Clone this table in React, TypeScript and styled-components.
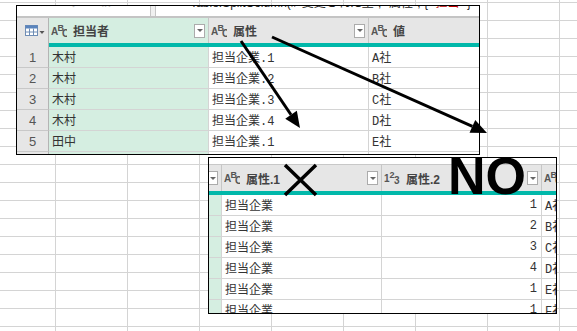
import React from 'react';
import styled, { createGlobalStyle } from 'styled-components';

type Tone = 'white' | 'green' | 'gray';

const toneBg: Record<Tone, string> = {
  white: '#ffffff',
  green: '#d5eee1',
  gray: '#e6e6e6',
};

const GlobalStyle = createGlobalStyle`
  html, body {
    margin: 0;
    padding: 0;
    background: #fff;
  }
  body {
    font-family: "Noto Sans CJK JP", sans-serif;
  }
`;

// excel sheet behind the pasted screenshots
const Sheet = styled.div`
  position: relative;
  width: 577px;
  height: 331px;
  overflow: hidden;
  background-color: #fff;
  background-image:
    linear-gradient(to right, #d4d4d4 1px, transparent 1px),
    linear-gradient(to bottom, #d4d4d4 1px, transparent 1px);
  background-size: 72px 100%, 100% 18px;
  background-position: 55px 0, 0 2px;
`;

const Shot = styled.div<{ $left: number; $top: number; $width: number; $height: number }>`
  position: absolute;
  left: ${({ $left }) => $left}px;
  top: ${({ $top }) => $top}px;
  width: ${({ $width }) => $width}px;
  height: ${({ $height }) => $height}px;
  box-sizing: border-box;
  border: 1px solid #000;
  background: #fff;
  overflow: hidden;
  display: flex;
  flex-direction: column;
`;

const FormulaBar = styled.div`
  flex-shrink: 0;
  height: 10px;
  display: flex;
  gap: 4px;
  background: #f0f0f0;
  border-bottom: 2px solid #c4c4c4;
`;

const NameBox = styled.div`
  width: 111px;
  background: #fff;
  border-right: 1px solid #c6c6c6;
  display: flex;
  gap: 22px;
  padding-left: 22px;
  overflow: hidden;
`;

const FormulaInput = styled.div`
  flex: 1;
  background: #fff;
  border-left: 1px solid #c6c6c6;
  padding-left: 24px;
  overflow: hidden;
  white-space: nowrap;
`;

// the bar is cropped at the top of the screenshot, only the feet of the glyphs show
const CroppedText = styled.span<{ $faint?: boolean }>`
  display: block;
  margin-top: -11px;
  line-height: 16px;
  font-size: 12px;
  font-family: "Liberation Sans", "Noto Sans CJK JP", sans-serif;
  color: ${({ $faint }) => ($faint ? '#c4c4c4' : '#222')};
  white-space: nowrap;
`;

const Red = styled.span`
  color: #c00000;
`;

const TopStrip = styled.div`
  flex-shrink: 0;
  height: 6px;
  background: #fff;
  border-bottom: 1px solid #c8c8c8;
`;

const Table = styled.div<{ $cols: string; $head: number }>`
  display: grid;
  grid-template-columns: ${({ $cols }) => $cols};
  grid-template-rows: ${({ $head }) => $head}px 4px;
  grid-auto-rows: 21px;
`;

const HeadCell = styled.div<{ $tone: Tone; $end?: boolean }>`
  box-sizing: border-box;
  display: flex;
  align-items: center;
  justify-content: ${({ $end }) => ($end ? 'flex-end' : 'flex-start')};
  gap: 6px;
  padding-left: 2px;
  background: ${({ $tone }) => toneBg[$tone]};
  border-right: 1px solid #c6c6c6;
  overflow: hidden;
  white-space: nowrap;
  font-family: "Liberation Sans", "Noto Sans CJK JP", sans-serif;
  font-size: 12px;
  font-weight: bold;
  color: #444;
`;

const CornerCell = styled(HeadCell)`
  padding-left: 8px;
  gap: 1px;
  border-right-color: #b4b4b4;
`;

const Stripe = styled.div<{ $index?: boolean }>`
  background: ${({ $index }) => ($index ? '#e6e6e6' : '#01b8aa')};
  border-right: ${({ $index }) => ($index ? '1px solid #b4b4b4' : 'none')};
  box-sizing: border-box;
`;

const Cell = styled.div<{ $tone: Tone; $right?: boolean }>`
  box-sizing: border-box;
  display: flex;
  align-items: center;
  justify-content: ${({ $right }) => ($right ? 'flex-end' : 'flex-start')};
  padding: 0 4px 0 3px;
  background: ${({ $tone }) => toneBg[$tone]};
  border-right: 1px solid #d4d4d4;
  border-bottom: 1px solid #d4d4d4;
  overflow: hidden;
  white-space: nowrap;
  font-family: "Liberation Mono", "Noto Sans CJK JP", monospace;
  font-size: 12px;
  color: #333;
`;

const IndexCell = styled(Cell)`
  justify-content: center;
  padding: 0;
  border-right-color: #b4b4b4;
  border-bottom-color: #c8c8c8;
  font-family: "Liberation Sans", sans-serif;
  font-size: 13px;
  color: #555;
`;

const DropButton = styled.span`
  flex-shrink: 0;
  margin-left: auto;
  margin-right: 3px;
  width: 11px;
  height: 14px;
  box-sizing: border-box;
  border: 1px solid #ababab;
  background: #fff;
  display: flex;
  align-items: center;
  justify-content: center;

  &::after {
    content: '';
    border-left: 3px solid transparent;
    border-right: 3px solid transparent;
    border-top: 3px solid #666;
  }
`;

const Overlay = styled.svg`
  position: absolute;
  left: 0;
  top: 0;
  pointer-events: none;
`;

const Stamp = styled.div`
  position: absolute;
  left: 448px;
  top: 150px;
  font-family: "Liberation Sans", sans-serif;
  font-size: 52px;
  font-weight: bold;
  line-height: 1;
  color: #000;
`;

const TypeIcon = ({ kind }: { kind: 'text' | 'number' }) => {
  const [a, b, c] = kind === 'text' ? ['A', 'B', 'C'] : ['1', '2', '3'];
  return (
    <svg width="16" height="14" viewBox="0 0 16 14" style={{ flexShrink: 0 }}>
      <g fill="#555" fontFamily="Liberation Sans, sans-serif">
        <text x="0" y="11" fontSize="10">{a}</text>
        <text x={kind === 'text' ? 6.5 : 5.5} y="7" fontSize="9">{b}</text>
        <text x={kind === 'text' ? 11 : 10} y="13" fontSize="10">{c}</text>
      </g>
    </svg>
  );
};

const TableIcon = () => (
  <>
    <svg width="13" height="11" viewBox="0 0 13 11">
      <rect x="0.5" y="0.5" width="12" height="10" fill="#fff" stroke="#6f8db5" />
      <rect x="0.5" y="0.5" width="12" height="3" fill="#5a84bd" />
      <path d="M4.5 3.5v7M8.5 3.5v7M0.5 7h12" stroke="#6f8db5" fill="none" />
    </svg>
    <svg width="6" height="11" viewBox="0 0 6 11">
      <path d="M0.5 6h5l-2.5 3z" fill="#555" />
    </svg>
  </>
);

const Arrow = ({ x1, y1, x2, y2 }: { x1: number; y1: number; x2: number; y2: number }) => {
  const len = Math.hypot(x2 - x1, y2 - y1);
  const dx = (x2 - x1) / len;
  const dy = (y2 - y1) / len;
  const bx = x2 - dx * 16;
  const by = y2 - dy * 16;
  const head = `${x2},${y2} ${bx - dy * 7},${by + dx * 7} ${bx + dy * 7},${by - dx * 7}`;
  return (
    <g>
      <line x1={x1} y1={y1} x2={bx} y2={by} stroke="#000" strokeWidth="3" />
      <polygon points={head} fill="#000" />
    </g>
  );
};

const firstRows = [
  ['1', '木村', '担当企業.1', 'A社'],
  ['2', '木村', '担当企業.2', 'B社'],
  ['3', '木村', '担当企業.3', 'C社'],
  ['4', '木村', '担当企業.4', 'D社'],
  ['5', '田中', '担当企業.1', 'E社'],
  ['', '', '', ''],
];

const splitRows = [
  ['担当企業', '1', 'A社'],
  ['担当企業', '2', 'B社'],
  ['担当企業', '3', 'C社'],
  ['担当企業', '4', 'D社'],
  ['担当企業', '1', 'E社'],
  ['担当企業', '1', 'F社'],
];

const App = () => {
  return (
    <>
      <GlobalStyle />
      <Sheet>
        <Shot $left={16} $top={5} $width={464} $height={150}>
          <FormulaBar>
            <NameBox>
              <CroppedText $faint>✕</CroppedText>
              <CroppedText $faint>✓</CroppedText>
              <CroppedText $faint>fx</CroppedText>
            </NameBox>
            <FormulaInput>
              <CroppedText>
                = Table.SplitColumn(#"変更された型", "属性",  {'{ '}
                <Red>"担当"</Red> {'}'}
              </CroppedText>
            </FormulaInput>
          </FormulaBar>
          <Table $cols="32px 160px 160px 160px" $head={25}>
            <CornerCell $tone="gray">
              <TableIcon />
            </CornerCell>
            <HeadCell $tone="green">
              <TypeIcon kind="text" />
              担当者
              <DropButton />
            </HeadCell>
            <HeadCell $tone="gray">
              <TypeIcon kind="text" />
              属性
              <DropButton />
            </HeadCell>
            <HeadCell $tone="gray">
              <TypeIcon kind="text" />
              値
              <DropButton />
            </HeadCell>
            <Stripe $index />
            <Stripe />
            <Stripe />
            <Stripe />
            {firstRows.map((row, i) => (
              <React.Fragment key={i}>
                <IndexCell $tone="gray">{row[0]}</IndexCell>
                <Cell $tone="green">{row[1]}</Cell>
                <Cell $tone="white">{row[2]}</Cell>
                <Cell $tone="white">{row[3]}</Cell>
              </React.Fragment>
            ))}
          </Table>
        </Shot>

        <Shot $left={208} $top={157} $width={349} $height={157}>
          <TopStrip />
          <Table $cols="13px 160px 160px 160px" $head={26}>
            <HeadCell $tone="gray" $end>
              <DropButton />
            </HeadCell>
            <HeadCell $tone="gray">
              <TypeIcon kind="text" />
              属性.1
              <DropButton />
            </HeadCell>
            <HeadCell $tone="gray">
              <TypeIcon kind="number" />
              属性.2
              <DropButton />
            </HeadCell>
            <HeadCell $tone="gray">
              <TypeIcon kind="text" />
              値
              <DropButton />
            </HeadCell>
            <Stripe />
            <Stripe />
            <Stripe />
            <Stripe />
            {splitRows.map((row, i) => (
              <React.Fragment key={i}>
                <Cell $tone="green" />
                <Cell $tone="white">{row[0]}</Cell>
                <Cell $tone="white" $right>{row[1]}</Cell>
                <Cell $tone="white">{row[2]}</Cell>
              </React.Fragment>
            ))}
          </Table>
        </Shot>

        <Overlay width="577" height="331" viewBox="0 0 577 331">
          <Arrow x1={241} y1={41} x2={300} y2={128} />
          <Arrow x1={272} y1={37} x2={487} y2={133} />
          <path d="M285 165L316 195M316 165L285 195" stroke="#000" strokeWidth="3.5" fill="none" />
        </Overlay>
        <Stamp>NO</Stamp>
      </Sheet>
    </>
  );
};

export default App;
